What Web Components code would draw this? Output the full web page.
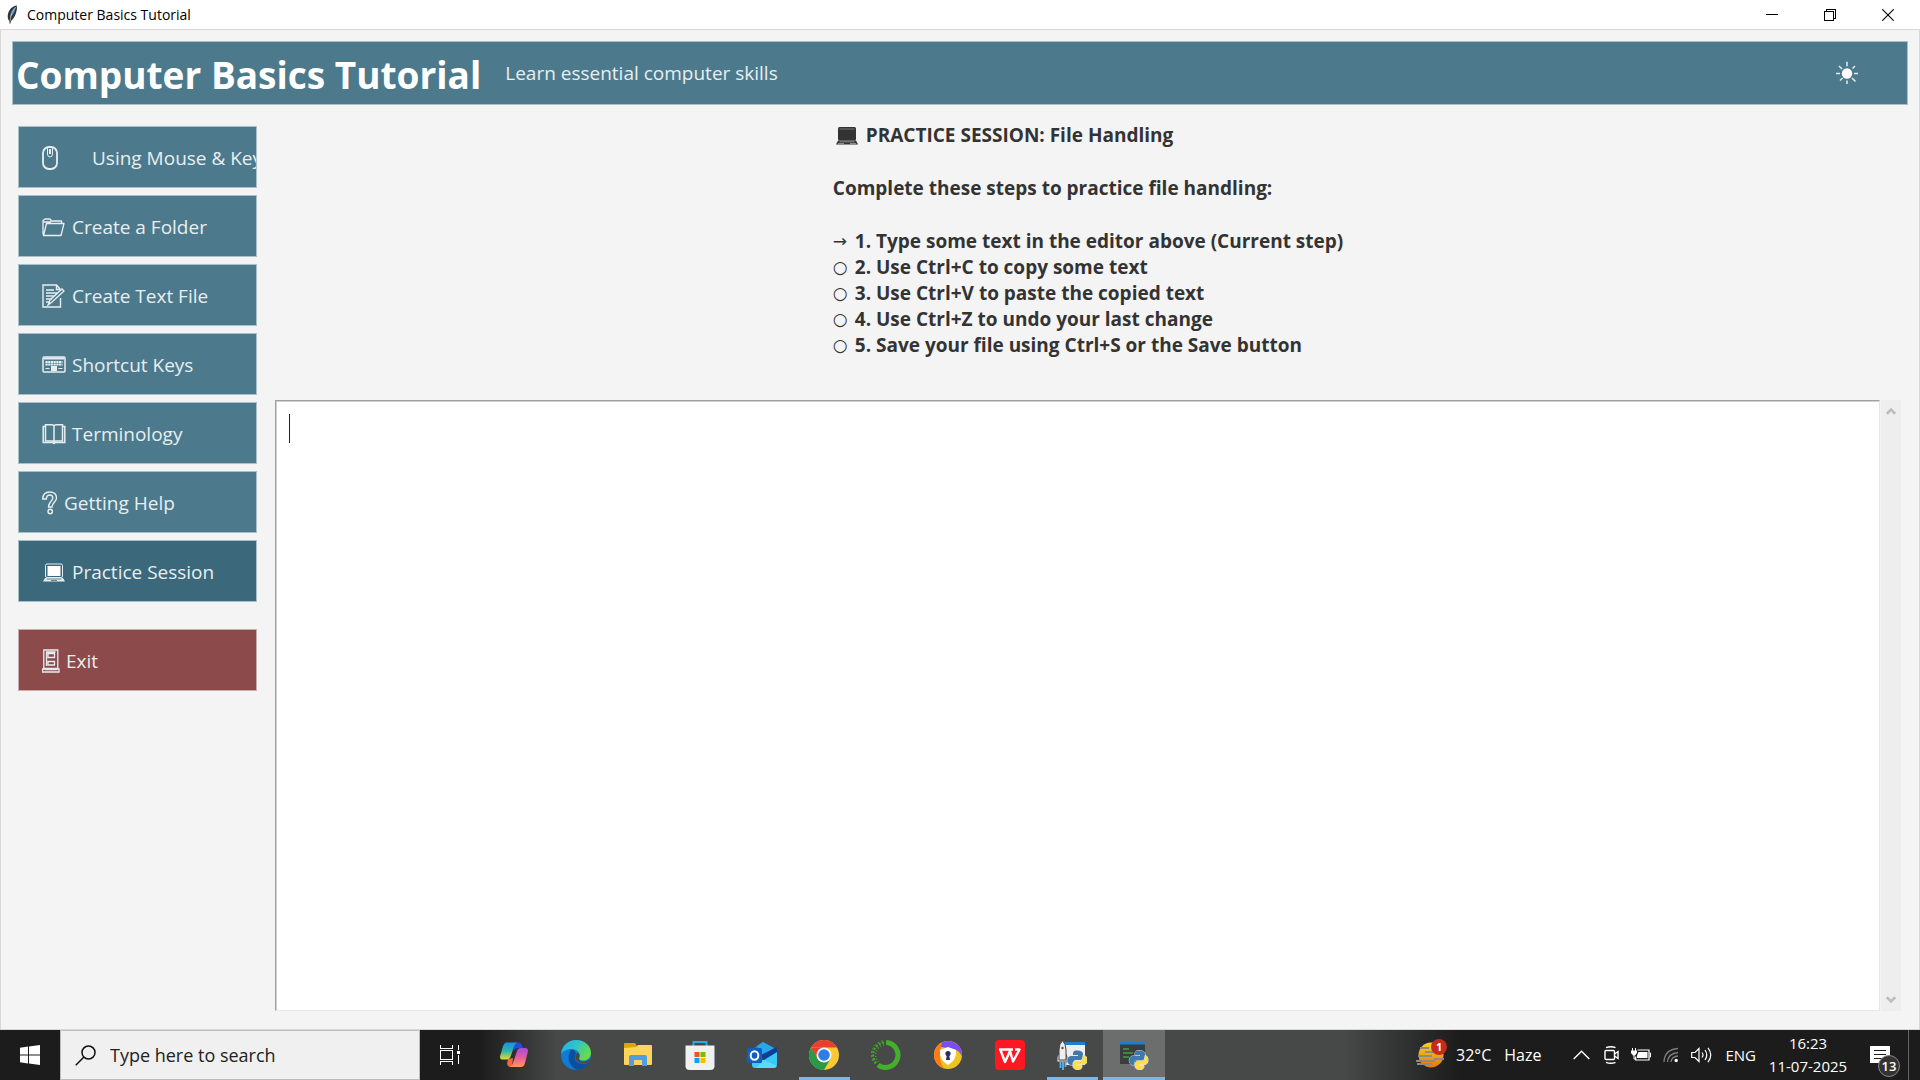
<!DOCTYPE html>
<html lang="en">
<head>
<meta charset="utf-8">
<title>Computer Basics Tutorial</title>
<style>
html,body{margin:0;height:100%}
body{display:flex;flex-direction:column;background:#f4f4f4;font-family:"Open Sans","Noto Sans",sans-serif;overflow:hidden}
</style>
</head>
<body>
<app-window></app-window>
<task-bar></task-bar>
<script>
const ICONS={
mouse:`<svg width="24" height="24" viewBox="0 0 24 24" fill="none" stroke="currentColor"><rect x="1" y="1" width="14" height="22" rx="6" stroke-width="1.8"/><path d="M5.500 1.500v6.500q0 3 2.500 3t2.500-3V1.500" stroke-width="1"/><path d="M8 3v5" stroke-width="2"/></svg>`,
folder:`<svg width="24" height="24" viewBox="0 0 24 24" fill="none" stroke="currentColor" stroke-width="1.3" stroke-linejoin="round"><path d="M1 19.500V5.500L3 4h5l1.500 2H19.500v2.500M4.500 8.500H22L19 20.500H1.500zM1.500 7H9"/></svg>`,
note:`<svg width="24" height="24" viewBox="0 0 24 24" fill="none" stroke="currentColor" stroke-width="1.4"><path d="M18.500 14v9H1V1h13.500l4 4.500M14.500 1v4.500h4M4 6h8M4 9h11M4 12h8M4 15h6M4 18h4"/><path d="M20 5l2 2L10 18l-4 3 2-5z" stroke-width="1.3"/></svg>`,
keys:`<svg width="24" height="24" viewBox="0 0 24 24" fill="none" stroke="currentColor"><rect x="1" y="4" width="22" height="15" rx="1" stroke-width="1.500"/><path d="M2 5.500h20" stroke-width="2"/><path d="M3.500 9h17M3.500 11.500h17" stroke-width="1.800" stroke-dasharray="2.200 .5"/><path d="M3.500 15.500h4M16.500 15.500h4" stroke-width="1"/><path d="M9 15.500h6" stroke-width="5"/></svg>`,
book:`<svg width="24" height="24" viewBox="0 0 24 24" fill="none" stroke="currentColor" stroke-width="1.500"><path d="M3.500 19V2.800h6.500q1.500 0 2 1.200.5-1.200 2-1.200h6.500V19H14q-1.500 0-2 1-.5-1-2-1zM12 4v16"/><path d="M3.500 4.500H1.200V20.500h9.300l1.500 1 1.500-1H22.800V4.500h-2.300"/></svg>`,
help:`<svg width="24" height="24" viewBox="0 0 24 24" fill="none" stroke="currentColor" stroke-width="1.400"><path d="M.8 8Q1 1 7.500 1 14.500 1 14.500 7c0 4-4.500 4.500-4.500 9H6.500c0-5 4.300-6 4.300-9 0-2-1.300-3-3.200-3-2 0-3.100 1.500-3.300 4z"/><circle cx="8.200" cy="20.500" r="2.200"/></svg>`,
laptop:`<svg width="24" height="24" viewBox="0 0 24 24"><rect x="3" y="4" width="18" height="13.500" rx="1.500" fill="currentColor"/><path d="M3 17.500h18l2 4H1z" fill="currentColor"/><path d="M4.500 6h15" stroke="#888" stroke-width=".8"/><path d="M4.500 18.800h15M3 20.500h6M15 20.500h6" stroke="#999" stroke-width=".9"/></svg>`,
laptoplight:`<svg width="24" height="24" viewBox="0 0 24 24"><rect x="3.500" y="4" width="17" height="13.500" rx="1.500" fill="none" stroke="currentColor"/><rect x="5.500" y="6" width="13" height="10" fill="#fff"/><path d="M3 18h18l2 3.500H1z" fill="currentColor"/><path d="M4.500 19h15M9 20.500h6" stroke="#3b697b" stroke-width=".8"/></svg>`,
door:`<svg width="24" height="24" viewBox="0 0 24 24" fill="none" stroke="currentColor" stroke-width="1.300"><path d="M1.800 19.500V1h14v18.500zM.6 20h16.400v3H.6zM4.500 17V3h9M6 8.500V4.500h6.500v4H6zM6 16v-3.500h6.500V16H6z"/><path d="M3 20.800h12" stroke-width="1"/></svg>`,
sun:`<svg width="24" height="24" viewBox="0 0 24 24" stroke="currentColor" stroke-width="1.500"><circle cx="12" cy="12.500" r="5.200" fill="currentColor" stroke="none"/><path d="M12 .8v4.500M12 19.500v3.500M1 12.500h4M19 12.500h4M4 5l3 3M20 5l-2.500 2.500M5 19.500l2.500-2.500M20.500 20.500L17 17" fill="none" opacity=".85"/></svg>`,
feather:`<svg width="16" height="20" viewBox="0 0 16 20"><path d="M11 .5C6 1 2.500 5 1.800 10c-.3 3 .2 4.500 1.400 6L4 19.500l1-3.500C8.500 13.500 11.500 6 11 .5z" fill="#333"/><path d="M9.500 2C6 4 4 8 3.800 12.500 7 10.500 9.500 6 9.500 2z" fill="#4d84c4"/><path d="M10.500 1.500Q5 7 4 16" stroke="#c8d4e2" stroke-width=".7" fill="none"/></svg>`,
min:`<svg width="12" height="12" viewBox="0 0 12 12" stroke="#000" shape-rendering="crispEdges"><path d="M0 5.500h12"/></svg>`,
restore:`<svg width="12" height="12" viewBox="0 0 12 12" stroke="#000" fill="none" shape-rendering="crispEdges"><path d="M.5 2.500h9v9h-9zM2.500 2.500v-2h9v9h-2"/></svg>`,
close:`<svg width="12" height="12" viewBox="0 0 12 12" stroke="#000" stroke-width="1.100"><path d="M.3.3l11.400 11.400M11.700.3L.3 11.700"/></svg>`,
win:`<svg width="20" height="20" viewBox="0 0 20 20" fill="#fff"><path d="M0 2.800L8 1.600v7.800H0zM9 1.500L20 0v9.400H9zM0 10.400h8v8L0 17.200zM9 10.400h11V20L9 18.500z"/></svg>`,
search:`<svg width="21" height="21" viewBox="0 0 21 21" fill="none" stroke="#111" stroke-width="1.500"><circle cx="13.500" cy="7.500" r="6.500"/><path d="M9 12L.7 20.300"/></svg>`,
tasks:`<svg width="20" height="20" viewBox="0 0 20 20" fill="none" stroke="#fff" shape-rendering="crispEdges"><path d="M.5 5.500h12v9H.5zM.5 0v3.500h12V0M.5 20v-3.500h12V20M18.500 0v5M18.500 10v9"/><path d="M17 6h3v3h-3z" fill="#fff" stroke="none"/></svg>`,
copilot:`<svg width="30" height="30" viewBox="0 0 30 30"><defs><linearGradient id="a" x2="0" y2="1"><stop stop-color="#1a8fe8"/><stop offset=".5" stop-color="#2bb5a8"/><stop offset="1" stop-color="#e8dc2c"/></linearGradient><linearGradient id="b" x2="0" y2="1"><stop stop-color="#a050e0"/><stop offset=".5" stop-color="#e85a9c"/><stop offset="1" stop-color="#ff9a5c"/></linearGradient></defs><path d="M15 2.500h5q2 0 3 3L24 8h-6q-2 0-3 3z" fill="#1f4fd8"/><path d="M7 2.500h11q-2 1-3 4l-3 9q-1 4-4 4H3q-2 0-2-3L4 6q1-3 3-3.500z" fill="url(#a)"/><path d="M9 19l5-1-1 9h-2q-2 0-3-3z" fill="#f2683c"/><path d="M22 8h4q3 0 3 3l-3 12q-1 4-4 4H11q2-1 3-4l4-12q1-3 4-3z" fill="url(#b)"/></svg>`,
edge:`<svg width="30" height="30" viewBox="0 0 30 30"><defs><linearGradient id="a" x2="1" y2=".5"><stop stop-color="#29a8e8"/><stop offset=".5" stop-color="#30c4c8"/><stop offset="1" stop-color="#68dc48"/></linearGradient></defs><circle cx="15" cy="15" r="15" fill="#0f7bd6"/><path d="M0 14C1 5 8 0 15 0c9 0 15 6 15 13 0 5-4 7.500-8 7.500-3 0-4.500-1-4-2.500 2-5-2-9-7-9C6 9 2 11 0 14z" fill="url(#a)"/><path d="M11 9.500c-5 4-5 16 5 20.300C21 30 26 27 28 22.500c-4 2-12 2-14-3-.8-2.500.5-4 1-6-.5-2-2-3.500-4-4z" fill="#0c4f9c"/><path d="M18.500 17c-1.500 3 1 5 5 4.500 3-.3 5-2 6-4l-1 4.500c-4 2-12 2-14-3-.7-3 .5-5 2-6.500 2 1 2.500 3 2 4.500z" fill="#474848"/></svg>`,
explorer:`<svg width="30" height="30" viewBox="0 0 30 30"><path d="M1 4q0-1 1-1h10l2 3v4H1z" fill="#e0a010"/><path d="M1 8l12-1 2-2h13q1 0 1 1v18q0 1-1 1H2q-1 0-1-1z" fill="#ffd35c"/><path d="M6 17q0-2 2-2h14q2 0 2 2v9h-5v-6h-8v6H6z" fill="#4b9fe2"/></svg>`,
store:`<svg width="30" height="30" viewBox="0 0 30 30"><path d="M8.500 7V2h13v5" fill="none" stroke="#26a9e8" stroke-width="2"/><path d="M.5 5.500h29V26q0 4-4 4h-21q-4 0-4-4z" fill="#f0f0f0"/><path d="M9.500 12h5v5h-5z" fill="#f25022"/><path d="M15.500 12h5v5h-5z" fill="#7fba00"/><path d="M9.500 18h5v5h-5z" fill="#00a4ef"/><path d="M15.500 18h5v5h-5z" fill="#ffb900"/></svg>`,
outlook:`<svg width="30" height="30" viewBox="0 0 30 30"><path d="M4 10L16 2l14 8v8H4z" fill="#1484d8"/><path d="M10 6l6-4 11 6-12 8z" fill="#2aa6ea"/><path d="M14 15L30 7v6L17 21z" fill="#0c3f94"/><path d="M5 20l12 0 13-8v12q0 4-4 4H8q-3 0-3-3z" fill="#3cc8f8"/><path d="M17 20l13 6q-1 2-4 2H9z" fill="#58dcfc"/><rect y="8" width="15" height="15" rx="1.500" fill="#0f5fc0"/><ellipse cx="7.500" cy="15.500" rx="3.800" ry="4.300" fill="none" stroke="#fff" stroke-width="2"/></svg>`,
chrome:`<svg width="30" height="30" viewBox="0 0 30 30"><circle cx="15" cy="15" r="15" fill="#fcc934"/><path d="M2 7.500A15 15 0 0 0 15 30l6.500-11.300L15 15l-6.500 3.700z" fill="#2a9a48"/><path d="M2 7.500A15 15 0 0 1 28 7.500H15z" fill="#ea3f30"/><path d="M2 7.500L8.500 18.700 15 7.500z" fill="#ea3f30"/><path d="M2 7.500L8.500 18.700 8 22z" fill="#2a9a48"/><circle cx="15" cy="15" r="7.500" fill="#fff"/><circle cx="15" cy="15" r="5.800" fill="#2f7de8"/></svg>`,
conda:`<svg width="30" height="30" viewBox="0 0 30 30" fill="none" stroke="#43b02a"><path d="M15 2.500A12.500 12.500 0 1 1 7 25" stroke-width="5"/><path d="M13 2.500A12.500 12.500 0 0 0 6 24" stroke-width="2" stroke-dasharray="2 1.500"/><path d="M13 5A10 10 0 0 0 7.500 22" stroke-width="1.500" stroke-dasharray="1 2"/><path d="M12 .8A14 14 0 0 0 4 24" stroke-width="1" stroke-dasharray="2 2"/></svg>`,
avast:`<svg width="30" height="30" viewBox="0 0 30 30"><circle cx="15" cy="15" r="14" fill="#f0c420"/><path d="M8 3A14 14 0 0 1 29 16q-3-6-9-7L8 7z" fill="#7c4df0"/><path d="M9 2.500A14 14 0 0 0 11 28.500Q6 22 7 12z" fill="#ff7a1c"/><path d="M15 7l8 3q1 10-8 15Q6 20 7 10z" fill="#fff"/><circle cx="15" cy="13.500" r="2.600" fill="#283060"/><path d="M14 14h2l1 6h-4z" fill="#283060"/></svg>`,
wps:`<svg width="30" height="30" viewBox="0 0 30 30"><rect width="30" height="30" rx="4" fill="#ff1722"/><path d="M4 9.500h14M5.500 10l4.500 12 5-11 3 10.500L24.500 9.500H20" fill="none" stroke="#fff" stroke-width="2.400" stroke-linejoin="round"/></svg>`,
idle:`<svg width="30" height="30" viewBox="0 0 30 30"><path d="M8 3h20v22H8z" fill="#eee"/><path d="M8 2h20v3H8z" fill="#1b80cc"/><path d="M3 12L0 17v5h10v-5l-2-5z" fill="#ddd" stroke="#555"/><path d="M5.500.5Q2 4 2 10v10h7V10Q9 4 5.500.5z" fill="#eee" stroke="#444"/><circle cx="5.500" cy="8" r="1.200" fill="#555"/><path d="M3.500 22v6M6 22v8M8.500 22v5" stroke="#5cb4ec" stroke-width="1.800"/><g stroke="#e8e8e8" stroke-width="1" paint-order="stroke"><path d="M20 10.500c-4 0-4 2-4 4.500h5v1h-7c-5 0-5 9 0 9h2c0-4 1-5 4-5h3c2 0 3-1 3-3v-3c0-2-2-3.500-6-3.500z" fill="#3f79ae"/><path d="M21 29.500c4 0 4-2 4-4h-5v-1h7c4 0 4-9 0-9h-1c0 4-1 5.500-4 5.500h-3c-2 0-3 1-3 3v2.500c0 2 2 3 5 3z" fill="#ffdd50"/></g></svg>`,
python:`<svg width="30" height="30" viewBox="0 0 30 30"><path d="M1 2h25v22H1z" fill="#3a3c3d"/><path d="M1 2h25v2.500H1z" fill="#1b80cc"/><path d="M4 9h6M4 13h10M4 17h6" stroke="#3fa04a" stroke-width="1.300"/><g stroke="#e8e8e8" stroke-width="1" paint-order="stroke"><path d="M20 10.500c-4 0-4 2-4 4.500h5v1h-7c-5 0-5 9 0 9h1c0-4 1-5 4-5h4c2 0 3-1 3-3v-3c0-2-2-3.500-6-3.500z" fill="#3f79ae"/><path d="M21 29.500c4 0 4-2 4-4h-5v-1h6c4 0 4-9 0-9c0 4-1 5.500-4 5.500h-3c-2 0-3 1-3 3v2.500c0 2 2 3 5 3z" fill="#ffdd50"/></g></svg>`,
haze:`<svg width="30" height="28" viewBox="0 0 30 28"><defs><linearGradient id="a" x2="0" y2="1"><stop stop-color="#ffd21c"/><stop offset="1" stop-color="#e87410"/></linearGradient></defs><circle cx="15" cy="14" r="12.500" fill="url(#a)"/><path d="M4 7h9M9 11h12M2 15h14M18 18h10M0 20h19M1 23h15" stroke="#8b8b88" stroke-width="1.800"/></svg>`,
up:`<svg width="17" height="10" viewBox="0 0 17 10" fill="none" stroke="#fff" stroke-width="1.400"><path d="M.7 9L8.500 1.200 16.300 9"/></svg>`,
cam:`<svg width="15" height="18" viewBox="0 0 15 18" fill="none" stroke="#fff" stroke-width="1.400"><rect x="1" y="4.500" width="9.500" height="9" rx="1"/><path d="M10.500 8L14 5.500v7L10.500 10M2 1.700q5-2 9.500 0M2 16.300q5 2 9.500 0"/></svg>`,
batt:`<svg width="20" height="14" viewBox="0 0 20 14" fill="none" stroke="#fff"><path d="M6.500 2h11.500v10H4.700V8.500" stroke-width="1.200"/><path d="M7.500 4H16.500v6H6V7.500z" fill="#fff" stroke="none"/><path d="M18.500 5h1v4h-1M1.500 0v3M4.500 0v3M3 7v4h2" stroke-width="1"/><path d="M0 2.500h6v2.500L4 7.500H2L0 5z" fill="#fff" stroke="none"/></svg>`,
wifi:`<svg width="16" height="16" viewBox="0 0 16 16" fill="none" stroke="#7c7c7c" stroke-width="1.300"><path d="M1 15Q1.500 2.500 15 1.500M4.500 15Q5 6.500 15 5.500M8 15q.5-5.500 7-6"/><circle cx="13.200" cy="13.500" r="1.700" fill="#fff" stroke="none"/></svg>`,
sound:`<svg width="21" height="16" viewBox="0 0 21 16" fill="none" stroke="#fff" stroke-width="1.200"><path d="M.7 5.500H4L8 1.500v13l-4-4H.7zM11 5.500q2 2.500 0 5M14 3q3.500 5 0 10M17 .8q5.500 7.200 0 14.400"/></svg>`,
msg:`<svg width="20" height="19" viewBox="0 0 20 19"><path d="M0 0h20v17H0z" fill="#fff"/><path d="M4 4.500h12M4 8.500h12M4 12.500h8" stroke="#1c1c1c" stroke-width="1.200"/></svg>`,
scrollup:`<svg width="10" height="8" viewBox="0 0 10 8" fill="none" stroke="#bcbcbc" stroke-width="2.600"><path d="M.8 6.800L5 2.500l4.200 4.300"/></svg>`,
scrolldown:`<svg width="10" height="8" viewBox="0 0 10 8" fill="none" stroke="#bcbcbc" stroke-width="2.600"><path d="M.8 1.200L5 5.500l4.200-4.300"/></svg>`
};
const RESET=`*{box-sizing:border-box}button{font:inherit;color:inherit;border:0;background:none;padding:0;margin:0;border-radius:0}`;
function define(name,css,html){
  customElements.define(name,class extends HTMLElement{
    constructor(){
      super();
      const t=document.createElement('template');
      t.innerHTML=`<style>${RESET}${css}</style>${typeof html==='function'?html(this):html}`;
      this.attachShadow({mode:'open'}).append(t.content.cloneNode(true));
    }
  });
}
define('ui-icon',`:host{display:block;flex:none}svg{display:block}`,el=>ICONS[el.getAttribute('name')]||'');
define('title-bar',`
:host{display:flex;height:29px;background:#fff;align-items:center;padding:0 3px 0 6px}
h1{flex:1;margin:0 0 0 5px;font-size:14px;font-weight:400;line-height:20px;color:#000}
button{width:58px;height:28px;display:grid;place-items:center}`,
`<ui-icon name="feather"></ui-icon><h1>Computer Basics Tutorial</h1>
<button aria-label="Minimize"><ui-icon name="min"></ui-icon></button><button aria-label="Restore"><ui-icon name="restore"></ui-icon></button><button aria-label="Close"><ui-icon name="close"></ui-icon></button>`);
define('app-header',`
:host{display:flex;align-items:center;height:64px;background:#4c7a8c;border:1px solid #a9c0c9;color:#fff;padding:0 48px 0 3px}
h2{margin:0;padding-top:3px;font-size:37px;line-height:52px;font-weight:700;white-space:nowrap}
p{flex:1;margin:0 0 0 24px;font-size:19px;line-height:28px;color:#e8eef0}
button{display:block}`,
`<h2>Computer Basics Tutorial</h2><p>Learn essential computer skills</p><button aria-label="Toggle theme"><ui-icon name="sun"></ui-icon></button>`);
define('nav-button',`
:host{display:block}
button{display:flex;align-items:center;gap:var(--gap,6px);width:100%;height:62px;padding:1px 0 0 23px;overflow:hidden;white-space:nowrap;text-align:left;font-size:19px;line-height:28px;color:#e8eef0;background:#4c7a8c;border:1px solid #a9c0c9}
.box{width:var(--icon,24px);flex:none}
:host([active]) button{background:#3b697b}
:host([danger]) button{background:#8c4a4a;border-color:#c9adad}`,
el=>`<button><span class="box"><ui-icon name="${el.getAttribute('icon')}"></ui-icon></span><span><slot></slot></span></button>`);
define('side-nav',`
:host{display:flex;flex-direction:column;gap:7px;width:239px;flex:none}
nav{display:contents}
[danger]{margin-top:20px}`,
`<nav aria-label="Topics">
<nav-button icon="mouse" style="--gap:26px">Using Mouse &amp; Keyboard</nav-button>
<nav-button icon="folder">Create a Folder</nav-button>
<nav-button icon="note">Create Text File</nav-button>
<nav-button icon="keys">Shortcut Keys</nav-button>
<nav-button icon="book">Terminology</nav-button>
<nav-button icon="help" style="--icon:16px">Getting Help</nav-button>
<nav-button icon="laptoplight" active>Practice Session</nav-button>
<nav-button icon="door" danger style="--icon:18px">Exit</nav-button></nav>`);
define('practice-steps',`
:host{display:block;align-self:center;font-size:19px;line-height:26px;font-weight:700;color:#333}
h3{display:flex;align-items:center;gap:7px;margin:0 0 27px 2px;font-size:inherit}
p{margin:0 0 27px}ul{margin:0;padding:0;list-style:none}li{display:flex;white-space:nowrap}
i{width:22px;font:17px/26px "DejaVu Sans",sans-serif}`,
`<h3><ui-icon name="laptop"></ui-icon>PRACTICE SESSION: File Handling</h3>
<p>Complete these steps to practice file handling:</p>
<ul><li><i>→</i>1. Type some text in the editor above (Current step)</li>
<li><i>○</i>2. Use Ctrl+C to copy some text</li>
<li><i>○</i>3. Use Ctrl+V to paste the copied text</li>
<li><i>○</i>4. Use Ctrl+Z to undo your last change</li>
<li><i>○</i>5. Save your file using Ctrl+S or the Save button</li></ul>`);
define('text-editor',`
:host{display:flex;flex:1;min-height:0;gap:1px}
.area{position:relative;flex:1;display:flex}
textarea{flex:1;resize:none;margin:0;padding:12px;border:1px solid;border-color:#a0a0a0 #e6e6e6 #e6e6e6 #a0a0a0;box-shadow:inset 1px 1px #d0d0d0;background:#fff;font:20px/28px "Open Sans",sans-serif;outline:0;border-radius:0}
.caret{position:absolute;left:14px;top:14px;width:1px;height:29px;background:#222}
.bar{width:20px;background:#eee;display:flex;flex-direction:column;justify-content:space-between}
button{height:22px;display:grid;place-items:center}`,
`<div class="area"><textarea aria-label="Practice editor"></textarea><span class="caret"></span></div>
<div class="bar"><button aria-label="Scroll up"><ui-icon name="scrollup"></ui-icon></button><button aria-label="Scroll down"><ui-icon name="scrolldown"></ui-icon></button></div>`);
define('app-window',`
:host{display:flex;flex-direction:column;flex:1;min-height:0}
.client{flex:1;min-height:0;display:flex;flex-direction:column;border:1px solid #d8d8d8;padding:11px 11px 18px;background:#f4f4f4}
.row{flex:1;min-height:0;display:flex;gap:18px;padding:21px 7px 0 6px}
main{flex:1;display:flex;flex-direction:column;gap:42px;margin-top:-4px}`,
`<title-bar></title-bar><div class="client"><app-header></app-header><div class="row"><side-nav></side-nav><main><practice-steps></practice-steps><text-editor></text-editor></main></div></div>`);
define('task-button',`
:host{display:block;width:62px}
button{position:relative;width:100%;height:50px;display:grid;place-items:center}
:host([active]) button{background:#6c6d6d}
:host([running]) button::after{content:"";position:absolute;bottom:0;left:6px;right:5px;height:3px;background:#78b6ee}
:host([active]) button::after{left:0!important;right:0!important}`,
el=>`<button aria-label="${el.getAttribute('icon')}"><ui-icon name="${el.getAttribute('icon')}"></ui-icon></button>`);
define('system-tray',`
:host{display:flex;align-items:center;height:50px;color:#fff;font-size:16px;line-height:22px;white-space:nowrap}
.w{position:relative;display:flex;align-items:center;gap:10px;margin-right:32px}
.w b{position:absolute;left:15px;top:-2px;width:16px;height:16px;border-radius:50%;background:#c42b1c;font-size:11px;line-height:16px;text-align:center}
.w span+span{margin-left:3px}
.icons{display:flex;align-items:center;gap:12px;margin-right:13px}
.icons [name=up]{margin-right:2px}
.lang{font-size:15px;margin-right:14px}
time{width:76px;text-align:center;font-size:15px;line-height:23px;display:flex;flex-direction:column;align-items:center}
.n{position:relative;margin-left:24px;width:38px;height:19px}
.n b{position:absolute;left:8px;top:9px;width:22px;height:22px;border:1px solid #888;border-radius:50%;background:#333;font-size:13px;line-height:20px;text-align:center;font-weight:600}
hr{margin:0 11px 0 0;width:1px;height:50px;border:0;background:#666}`,
`<div class="w"><ui-icon name="haze"></ui-icon><b>1</b><span>32°C</span><span>Haze</span></div>
<div class="icons"><ui-icon name="up"></ui-icon><ui-icon name="cam"></ui-icon><ui-icon name="batt"></ui-icon><ui-icon name="wifi"></ui-icon><ui-icon name="sound"></ui-icon></div>
<span class="lang">ENG</span><time datetime="2025-07-11T16:23"><span>16:23</span><span>11-07-2025</span></time>
<div class="n"><ui-icon name="msg"></ui-icon><b>13</b></div><hr>`);
define('task-bar',`
:host{display:flex;height:50px;flex:none;background:linear-gradient(90deg,#1c1c1c 25%,#474848 29%,#474848 70%,#1c1c1c 76%)}
.start,.view{width:60px;height:50px;display:grid;place-items:center}
.view{margin-right:3px}
label{width:360px;display:flex;align-items:center;gap:14px;padding-left:14px;background:#f0f0f0;border:1px solid #bcbcbc}
input{flex:1;min-width:0;border:0;padding:0;background:none;font:18px/26px "Open Sans",sans-serif;outline:0}
input::placeholder{color:#222;opacity:1}
system-tray{margin-left:auto}`,
`<button class="start" aria-label="Start"><ui-icon name="win"></ui-icon></button>
<label><ui-icon name="search"></ui-icon><input type="text" aria-label="Search" placeholder="Type here to search"></label>
<button class="view" aria-label="Task view"><ui-icon name="tasks"></ui-icon></button>
<task-button icon="copilot"></task-button><task-button icon="edge"></task-button><task-button icon="explorer"></task-button><task-button icon="store"></task-button><task-button icon="outlook"></task-button><task-button icon="chrome" running></task-button><task-button icon="conda"></task-button><task-button icon="avast"></task-button><task-button icon="wps"></task-button><task-button icon="idle" running></task-button><task-button icon="python" running active></task-button>
<system-tray></system-tray>`);
</script>
</body>
</html>
